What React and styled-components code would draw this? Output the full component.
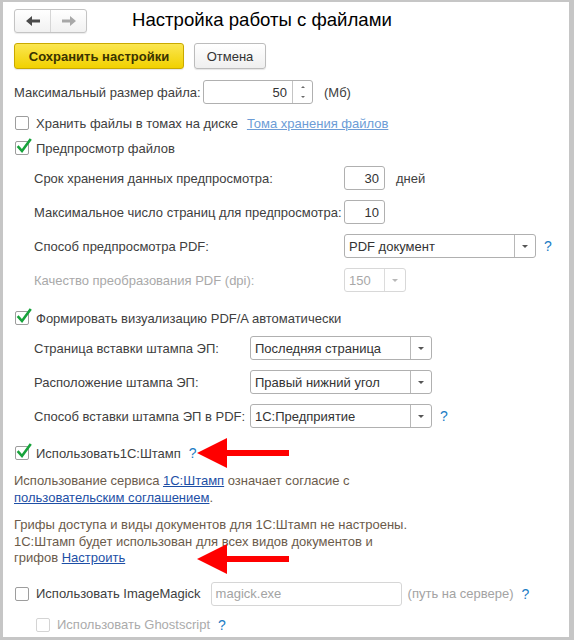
import styled, { createGlobalStyle } from "styled-components";

const Global = createGlobalStyle`
    html, body {
        margin: 0;
        padding: 0;
        background: #ffffff;
    }
    body {
        font-family: "Liberation Sans", Arial, sans-serif;
        font-size: 13px;
        color: #404040;
    }
`;

const CheckMark = () => (
    <svg width="16" height="17" viewBox="0 0 16 17">
        <path
            d="M2.5 9 L6 13 L14 2"
            fill="none"
            stroke="#17a33b"
            strokeWidth="2.6"
            strokeLinecap="square"
        />
    </svg>
);

const RedArrow = () => (
    <svg width="92" height="32" viewBox="0 0 92 32">
        <polygon points="0,16 30,1 30,31" fill="#ff0000" />
        <rect x="28" y="13" width="64" height="6" fill="#ff0000" />
    </svg>
);

const Checkbox = ({ checked, disabled }) => (
    <Box disabled={disabled}>{checked && <CheckMark />}</Box>
);

const Select = ({ value, width, disabled }) => (
    <SelectBox width={width} disabled={disabled}>
        <SelectValue disabled={disabled}>{value}</SelectValue>
        <DropButton disabled={disabled}>
            <Caret disabled={disabled} />
        </DropButton>
    </SelectBox>
);

const App = () => {
    return (
        <Page>
            <Global />
            <Panel>
                <Header>
                    <NavGroup>
                        <NavButton>
                            <svg width="14" height="10" viewBox="0 0 14 10">
                                <polygon points="0,5 6,0 6,3.5 14,3.5 14,6.5 6,6.5 6,10" fill="#4a4a4a" />
                            </svg>
                        </NavButton>
                        <NavButton divided>
                            <svg width="14" height="10" viewBox="0 0 14 10">
                                <polygon points="14,5 8,0 8,3.5 0,3.5 0,6.5 8,6.5 8,10" fill="#a8a8a8" />
                            </svg>
                        </NavButton>
                    </NavGroup>
                    <Title>Настройка работы с файлами</Title>
                </Header>

                <ButtonsRow>
                    <PrimaryButton>Сохранить настройки</PrimaryButton>
                    <SecondaryButton>Отмена</SecondaryButton>
                </ButtonsRow>

                <Row mt={11}>
                    <Label width={189}>Максимальный размер файла:</Label>
                    <SpinBox>
                        <SpinValue>50</SpinValue>
                        <SpinButtons>
                            <SpinArrow up />
                            <SpinArrow />
                        </SpinButtons>
                    </SpinBox>
                    <Suffix>(Мб)</Suffix>
                </Row>

                <Row mt={7}>
                    <Checkbox />
                    <CheckLabel>Хранить файлы в томах на диске</CheckLabel>
                    <FaintLink>Тома хранения файлов</FaintLink>
                </Row>

                <Row mt={1}>
                    <Checkbox checked />
                    <CheckLabel>Предпросмотр файлов</CheckLabel>
                </Row>

                <Row mt={6} indent={20}>
                    <Label width={310}>Срок хранения данных предпросмотра:</Label>
                    <NumberInput>30</NumberInput>
                    <Suffix>дней</Suffix>
                </Row>
                <Row mt={10} indent={20}>
                    <Label width={310}>Максимальное число страниц для предпросмотра:</Label>
                    <NumberInput>10</NumberInput>
                </Row>
                <Row mt={10} indent={20}>
                    <Label width={310}>Способ предпросмотра PDF:</Label>
                    <Select value="PDF документ" width={192} />
                    <Help>?</Help>
                </Row>
                <Row mt={10} indent={20}>
                    <Label width={310} disabled>
                        Качество преобразования PDF (dpi):
                    </Label>
                    <Select value="150" width={62} disabled />
                </Row>

                <Row mt={14}>
                    <Checkbox checked />
                    <CheckLabel>Формировать визуализацию PDF/A автоматически</CheckLabel>
                </Row>
                <Row mt={6} indent={20}>
                    <Label width={216}>Страница вставки штампа ЭП:</Label>
                    <Select value="Последняя страница" width={182} />
                </Row>
                <Row mt={10} indent={20}>
                    <Label width={216}>Расположение штампа ЭП:</Label>
                    <Select value="Правый нижний угол" width={182} />
                </Row>
                <Row mt={10} indent={20}>
                    <Label width={216}>Способ вставки штампа ЭП в PDF:</Label>
                    <Select value="1С:Предприятие" width={182} />
                    <Help>?</Help>
                </Row>

                <Row mt={13}>
                    <Checkbox checked />
                    <CheckLabel>Использовать1С:Штамп</CheckLabel>
                    <Help>?</Help>
                </Row>

                <Note mt={8}>
                    Использование сервиса <NoteLink>1С:Штамп</NoteLink> означает согласие с
                    <br />
                    <NoteLink>пользовательским соглашением</NoteLink>.
                </Note>

                <Note mt={11}>
                    Грифы доступа и виды документов для 1С:Штамп не настроены.
                    <br />
                    1С:Штамп будет использован для всех видов документов и
                    <br />
                    грифов <NoteLink>Настроить</NoteLink>
                </Note>

                <Row mt={15}>
                    <Checkbox />
                    <CheckLabel>Использовать ImageMagick</CheckLabel>
                    <PathInput>magick.exe</PathInput>
                    <Hint>(путь на сервере)</Hint>
                    <Help>?</Help>
                </Row>
                <Row mt={7} indent={21}>
                    <Checkbox disabled />
                    <CheckLabel disabled>Использовать Ghostscript</CheckLabel>
                    <Help>?</Help>
                </Row>
            </Panel>

            <Annotation x={197} y={437}>
                <RedArrow />
            </Annotation>
            <Annotation x={197} y={543}>
                <RedArrow />
            </Annotation>
        </Page>
    );
};

export default App;

const Page = styled.div`
    position: relative;
    width: 574px;
    height: 640px;
    box-sizing: border-box;
    background: #c6c6c6;
    padding: 2px 5px 3px 3px;
`;

const Panel = styled.div`
    height: 100%;
    background: #ffffff;
    box-sizing: border-box;
    padding: 7px 0 0 11px;
    display: flex;
    flex-direction: column;
`;

const Header = styled.div`
    display: flex;
    align-items: center;
    height: 24px;
    gap: 45px;
`;

const NavGroup = styled.div`
    display: flex;
    width: 73px;
    height: 24px;
    box-sizing: border-box;
    border: 1px solid #c4c4c4;
    border-radius: 3px;
    background: linear-gradient(#ffffff, #f1f1f1);
    box-shadow: 0 1px 1px rgba(0, 0, 0, 0.08);
`;

const NavButton = styled.div`
    flex: 1;
    display: flex;
    align-items: center;
    justify-content: center;
    border-left: ${(props) => (props.divided ? "1px solid #d6d6d6" : "none")};
`;

const Title = styled.div`
    font-size: 18.6px;
    color: #000000;
    padding-bottom: 2px;
`;

const ButtonsRow = styled.div`
    display: flex;
    gap: 10px;
    margin-top: 10px;
    height: 26px;
`;

const BaseButton = styled.div`
    display: flex;
    align-items: center;
    justify-content: center;
    box-sizing: border-box;
    height: 26px;
    border-radius: 3px;
    color: #333333;
    font-size: 13px;
    box-shadow: 0 1px 1px rgba(0, 0, 0, 0.1);
`;

const PrimaryButton = styled(BaseButton)`
    width: 170px;
    font-weight: bold;
    border: 1px solid #c9a900;
    background: linear-gradient(#fbe651, #f1d100);
    color: #3a3300;
`;

const SecondaryButton = styled(BaseButton)`
    width: 72px;
    border: 1px solid #bcbcbc;
    background: linear-gradient(#ffffff, #efefef);
`;

const Row = styled.div`
    display: flex;
    align-items: center;
    height: 24px;
    margin-top: ${(props) => props.mt || 0}px;
    padding-left: ${(props) => (props.indent ? props.indent : 0)}px;
    white-space: nowrap;
`;

const Label = styled.div`
    width: ${(props) => props.width}px;
    flex-shrink: 0;
    color: ${(props) => (props.disabled ? "#a9a9a9" : "#404040")};
`;

const Box = styled.div`
    position: relative;
    width: 14px;
    height: 14px;
    margin-left: 1px;
    flex-shrink: 0;
    box-sizing: border-box;
    border: 1px solid ${(props) => (props.disabled ? "#d4d4d4" : "#9d9d9d")};
    border-radius: 2px;
    background: #ffffff;

    svg {
        position: absolute;
        left: 0px;
        top: -4px;
    }
`;

const CheckLabel = styled.span`
    margin-left: 7px;
    color: ${(props) => (props.disabled ? "#ababab" : "#404040")};
`;

const FaintLink = styled.span`
    margin-left: 9px;
    color: #6c9cd6;
    text-decoration: underline;
`;

const Field = styled.div`
    display: flex;
    align-items: center;
    box-sizing: border-box;
    height: 24px;
    border: 1px solid #b0b0b0;
    border-radius: 3px;
    background: #ffffff;
    color: #333333;
    font-size: 13px;
`;

const SpinBox = styled(Field)`
    width: 110px;
`;

const SpinValue = styled.div`
    flex: 1;
    text-align: right;
    padding-right: 5px;
`;

const SpinButtons = styled.div`
    width: 20px;
    height: 100%;
    border-left: 1px solid #c4c4c4;
    display: flex;
    flex-direction: column;
    align-items: center;
    justify-content: space-between;
    padding: 5px 0;
    box-sizing: border-box;
`;

const SpinArrow = styled.div`
    width: 0;
    height: 0;
    border-left: 2px solid transparent;
    border-right: 2px solid transparent;
    border-${(props) => (props.up ? "bottom" : "top")}: 2px solid #6a6a6a;
`;

const Suffix = styled.span`
    margin-left: 11px;
    color: #404040;
`;

const NumberInput = styled(Field)`
    width: 41px;
    justify-content: flex-end;
    padding-right: 5px;
`;

const SelectBox = styled(Field)`
    width: ${(props) => props.width}px;
    border-color: ${(props) => (props.disabled ? "#d8d8d8" : "#b0b0b0")};
`;

const SelectValue = styled.div`
    flex: 1;
    padding-left: 4px;
    overflow: hidden;
    color: ${(props) => (props.disabled ? "#a8a8a8" : "#333333")};
`;

const DropButton = styled.div`
    width: 20px;
    height: 100%;
    display: flex;
    align-items: center;
    justify-content: center;
    border-left: 1px solid ${(props) => (props.disabled ? "#dcdcdc" : "#b8b8b8")};
`;

const Caret = styled.div`
    width: 0;
    height: 0;
    border-left: 3px solid transparent;
    border-right: 3px solid transparent;
    border-top: 3px solid ${(props) => (props.disabled ? "#b8b8b8" : "#555555")};
`;

const Help = styled.span`
    margin-left: 8px;
    color: #1b7cc4;
    font-size: 14px;
`;

const Note = styled.div`
    margin-top: ${(props) => props.mt}px;
    line-height: 16.5px;
    color: #6b5b4b;
    white-space: nowrap;
`;

const NoteLink = styled.span`
    color: #1d4fa6;
    text-decoration: underline;
`;

const PathInput = styled(Field)`
    width: 191px;
    margin-left: 10px;
    padding-left: 4px;
    border-color: #d6d6d6;
    color: #a3a3a3;
`;

const Hint = styled.span`
    margin-left: 6px;
    color: #a3a3a3;
`;

const Annotation = styled.div`
    position: absolute;
    left: ${(props) => props.x}px;
    top: ${(props) => props.y}px;
    line-height: 0;
`;
